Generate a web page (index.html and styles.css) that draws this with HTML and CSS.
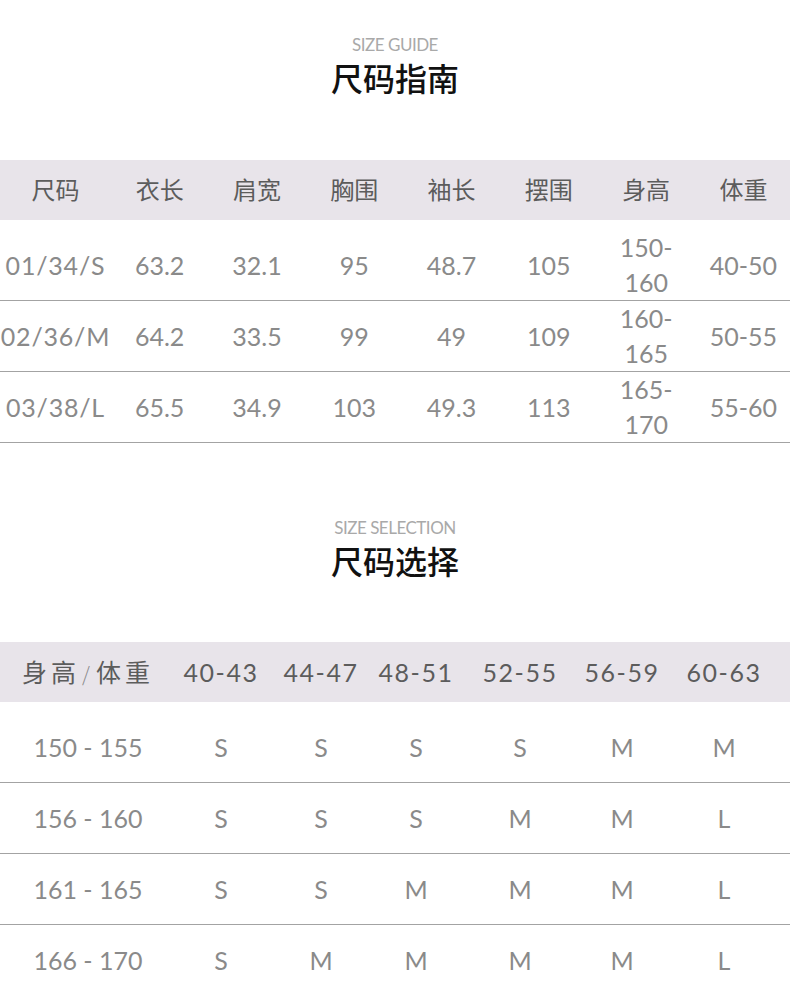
FILE: index.html
```html
<!DOCTYPE html>
<html lang="zh">
<head>
<meta charset="utf-8">
<title>尺码指南</title>
<link rel="stylesheet" href="styles.css">
</head>
<body>
<section class="guide">
  <header class="title">
    <div class="title-en">SIZE GUIDE</div>
    <h1 class="title-cn">尺码指南</h1>
  </header>
  <div class="table t1">
    <div class="row head">
      <span>尺码</span><span>衣长</span><span>肩宽</span><span>胸围</span><span>袖长</span><span>摆围</span><span>身高</span><span>体重</span>
    </div>
    <div class="row data first">
      <span>01/34/S</span><span>63.2</span><span>32.1</span><span>95</span><span>48.7</span><span>105</span><span class="wrap">150-<br>160</span><span>40-50</span>
    </div>
    <div class="row data">
      <span>02/36/M</span><span>64.2</span><span>33.5</span><span>99</span><span>49</span><span>109</span><span class="wrap">160-<br>165</span><span>50-55</span>
    </div>
    <div class="row data">
      <span>03/38/L</span><span>65.5</span><span>34.9</span><span>103</span><span>49.3</span><span>113</span><span class="wrap">165-<br>170</span><span>55-60</span>
    </div>
  </div>
</section>

<section class="selection">
  <header class="title">
    <div class="title-en">SIZE SELECTION</div>
    <h1 class="title-cn">尺码选择</h1>
  </header>
  <div class="table t2">
    <div class="row head">
      <span class="hw">身高<i class="slash">/</i>体重</span><span>40-43</span><span>44-47</span><span>48-51</span><span>52-55</span><span>56-59</span><span>60-63</span>
    </div>
    <div class="row data first">
      <span>150 - 155</span><span>S</span><span>S</span><span>S</span><span>S</span><span>M</span><span>M</span>
    </div>
    <div class="row data">
      <span>156 - 160</span><span>S</span><span>S</span><span>S</span><span>M</span><span>M</span><span>L</span>
    </div>
    <div class="row data">
      <span>161 - 165</span><span>S</span><span>S</span><span>M</span><span>M</span><span>M</span><span>L</span>
    </div>
    <div class="row data last">
      <span>166 - 170</span><span>S</span><span>M</span><span>M</span><span>M</span><span>M</span><span>L</span>
    </div>
  </div>
</section>
</body>
</html>
```
FILE: styles.css
```css
* { box-sizing: border-box; margin: 0; padding: 0; }
html, body { background: #fff; }
body {
  width: 790px;
  overflow: hidden;
  font-family: "Lato", "Noto Sans CJK SC", sans-serif;
}

.title {
  display: flex;
  flex-direction: column;
  align-items: center;
}
.title-en {
  font-family: "Lato", "Noto Sans", sans-serif;
  font-size: 17px;
  line-height: 20px;
  color: #a9a9a9;
  letter-spacing: -0.5px;
}
.title-cn {
  font-family: "Noto Sans CJK SC", sans-serif;
  font-weight: 500;
  font-size: 32px;
  line-height: 40px;
  color: #111;
  margin-top: 2px;
}

.guide { padding-top: 35px; }
.guide .title { margin-bottom: 63px; }
.selection { padding-top: 75px; }
.selection .title { margin-bottom: 62px; }

.row {
  display: grid;
  align-items: center;
  justify-items: center;
  text-align: center;
}
.row.head {
  background: #e8e4ea;
  height: 60px;
  color: #5c5c5c;
  font-family: "Noto Sans CJK SC", sans-serif;
  font-size: 24px;
  line-height: 32px;
  padding-bottom: 3px;
  margin-bottom: 10px;
}
.row.data {
  height: 71px;
  border-bottom: 1px solid #a3a3a3;
  color: #8a8a8a;
  font-size: 25px;
  line-height: 35px;
}
.row.data.last { border-bottom: none; }

.t1 .row { grid-template-columns: 111px repeat(7, 97.3px); width: 792px; }
.t1 .row.data span:first-child { letter-spacing: 0.8px; }

.t2 .row {
  grid-template-columns: 176px 90px 110px 80px 128px 76px 128px;
}
.t2 .row.head {
  font-family: "Lato", "Noto Sans CJK SC", sans-serif;
  font-size: 25px;
  letter-spacing: 1.5px;
  padding-bottom: 0;
}
.t2 .row.head .hw {
  font-family: "Noto Sans CJK SC", sans-serif;
  letter-spacing: 4px;
}
.slash {
  font-style: normal;
  font-weight: 300;
  font-size: 20px;
  color: #8a8a8a;
  margin: 0 2px;
}
.t2 .row.data span:first-child { letter-spacing: 0; }
```
